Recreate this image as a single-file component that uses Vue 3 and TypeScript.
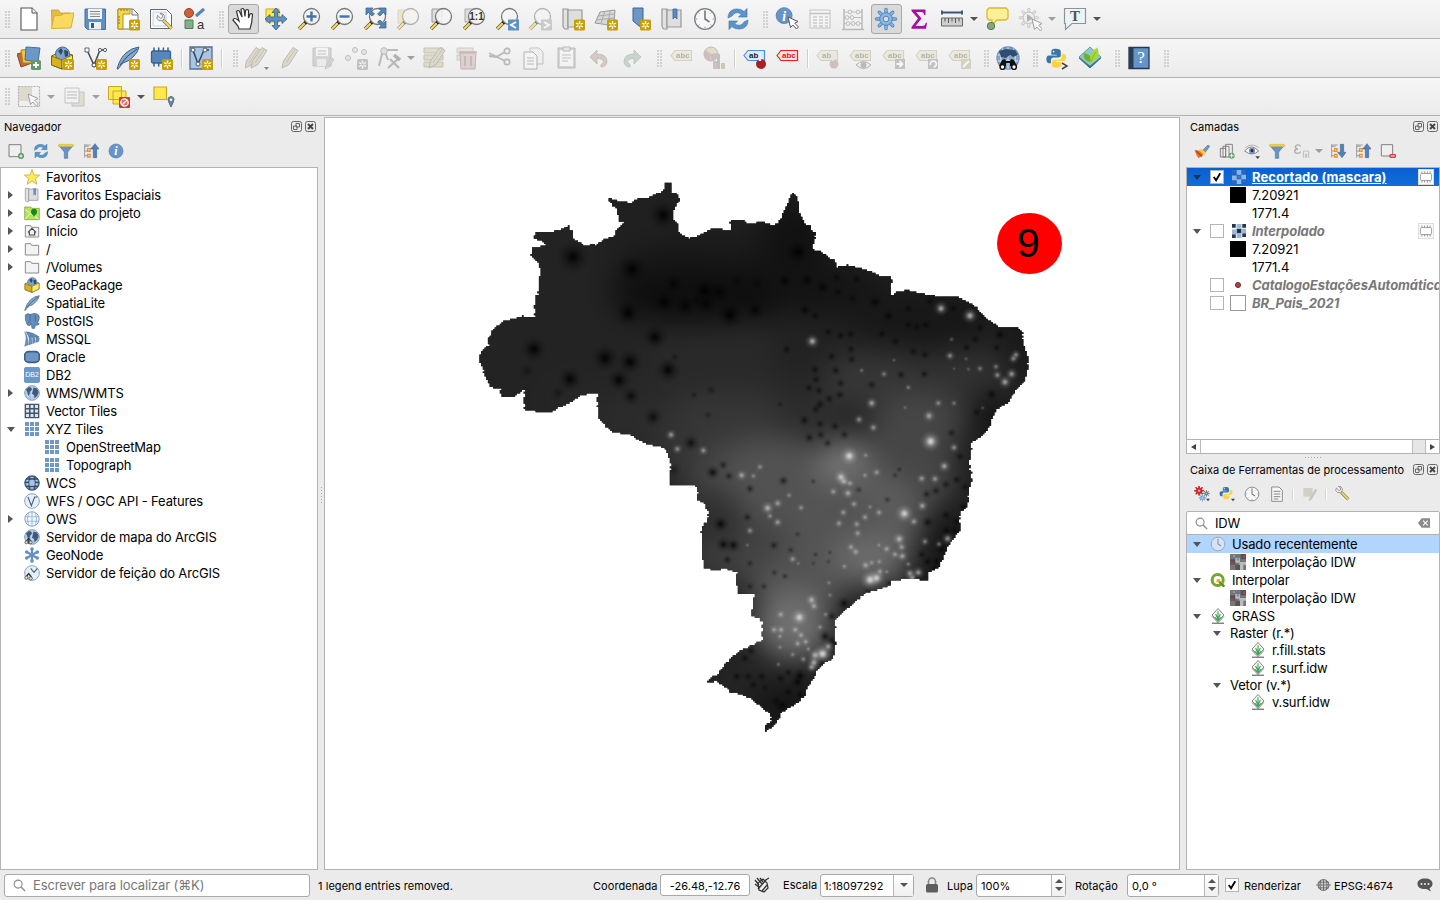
<script setup lang="ts">
interface Row {
  label: string
  icon?: string
  depth?: number
  arrow?: 'open' | 'closed'
  selected?: boolean
  short?: boolean
}
interface Layer {
  label: string
  kind: 'raster' | 'legend' | 'value' | 'point' | 'polygon'
  checked?: boolean
  selected?: boolean
}
interface Dot {
  x: number
  y: number
  r: number
  o: number
}

/* ---------- icon parts ---------- */
const badge = (x: number, y: number, fill = '#c4a000') =>
  `<g transform="translate(${x} ${y})"><rect width="11" height="11" rx="1.5" fill="${fill}"/><path d="M5.5 1.6v7.8M2.1 3.5l6.8 4M2.1 7.5l6.8-4" stroke="#fff" stroke-width="1.4"/><circle cx="5.5" cy="5.5" r="1.2" fill="${fill}"/></g>`
const lens = (inner: string, behind = '') =>
  `${behind}<path d="M9.5 14.5L2 22" stroke="#555" stroke-width="3.6"/><path d="M8.5 15.5L2 22" stroke="#fcd94a" stroke-width="2.2"/><path d="M9.8 14.2l-2 2" stroke="#111" stroke-width="3.4"/><circle cx="14.5" cy="9.5" r="8" fill="#f4f4f2" fill-opacity=".85" stroke="#777" stroke-width="1.3"/>${inner}`
const tag = (text: string, fill = '#e6e2c6', line = '#bbb69c', ink = '#777') =>
  `<path d="M2 9.500L6 4.500H22.500V14.500H6z" fill="${fill}" stroke="${line}" stroke-width="1.2"/><text x="7" y="12.300" font-family="Liberation Sans, Arial, sans-serif" font-weight="bold" font-size="8" fill="${ink}">${text}</text>`
const cursor = (x: number, y: number) =>
  `<path transform="translate(${x} ${y})" d="M0 0l2.500 10.500 2.300-2.500 3.700 4 2-2-3.700-3.700 3.200-1.800z" fill="#fff" stroke="#555" stroke-width="1"/>`
const globe = (land: string, bg = '#a9c3e2') =>
  `<circle cx="12" cy="12" r="11" fill="${bg}" stroke="#6f91b7" stroke-width="1.3"/><path d="M1.500 9h21M1.500 15h21M12 1v22M6.500 2.500Q3 12 6.500 21.500M17.500 2.500Q21 12 17.500 21.500" stroke="#dfe9f5" stroke-width=".9" fill="none"/>${land}`
const land = `<path d="M3 7l4-4 4 1 1 3-3 3-1 5-2 1-1-5zM14 4l5 1 3 5-2 6-4 4-1-5-3-2 1-4z" fill="#3f5b7c"/>`
const refresh = `<path d="M2 11Q2 3 10 2q5-.5 8 2.500l3-3V10h-8.500l3-3Q9 3.500 6 9z" fill="#5f93c8" stroke="#3f78b6" stroke-width=".7"/><path d="M22 13q0 8-8 9-5 .5-8-2.500l-3 3V14h8.500l-3 3Q15 20.500 18 15z" fill="#5f93c8" stroke="#3f78b6" stroke-width=".7"/>`
const clock = `<circle cx="12" cy="12" r="10.300" fill="#f7f7f7" stroke="#7e7e7e" stroke-width="1.300"/><path d="M12 4v8l4.500 3" stroke="#777" stroke-width="1.600" fill="none"/><path d="M12 2.800v1.500M12 19.700v1.500M2.800 12h1.500M19.700 12h1.500M5.500 5.500l1 1M17.500 17.500l1 1M5.500 18.500l1-1M17.500 6.500l1-1" stroke="#6893c0" stroke-width="1"/>`
const python = `<path d="M11.500 1.500c-4 0-5 1.500-5 3V8h6v1H4C1.500 9 1 11 1 13s1 4.500 3 4.500h2V14c0-2 1.500-3 3-3h5.500c1.500 0 2.500-1 2.500-2.500v-4c0-2-2-3-5.500-3z" fill="#3774a8"/><circle cx="9" cy="4.500" r="1" fill="#fff"/><path d="M12.500 22.500c4 0 5-1.500 5-3V16h-6v-1H20c2 0 3-1.500 3-4s-1-4-3-4h-2v3.500c0 2-1.500 3-3 3H9.500C8 14.500 7 15 7 17v3c0 2 2 2.500 5.500 2.500z" fill="#fdd444"/>`
const funnel = `<path d="M1.500 4h21l-8 9.500V23h-5v-9.500z" fill="#6b93bf" stroke="#4d79a8" stroke-width="1"/><path d="M1 2h22v3.500H1z" fill="#f0d33c" stroke="#c2a62c" stroke-width=".6"/>`
const scroll = `<path d="M2 2h5v20H4q-2-1-2-3z" fill="#e2e2e2" stroke="#999" stroke-width="1.200"/><path d="M7 3h14v17H7z" fill="#dedede" stroke="#999" stroke-width="1.200"/>`
const magnet = `<path d="M2.500 2v20M2.500 5h6M2.500 12h5M2.500 19h5M2.500 3h9" stroke="#888" stroke-width="1.200" fill="none"/><path d="M7 8.500h3.500v4H7zM7 17h3.500v4H7z" fill="#fff" stroke="#f08c28" stroke-width="2"/>`
const grid = (c: string) =>
  [1.5, 9, 16.5].map(x => [1.5, 9, 16.5].map(y => `<rect x="${x}" y="${y}" width="6" height="6" fill="${c}"/>`).join('')).join('')
const chip = (c: string, s: string) =>
  `<path d="M5 2.500v19M9.700 2.500v19M14.400 2.500v19M19 2.500v19" stroke="${s}" stroke-width="1.500"/><rect x="2.500" y="6" width="19" height="12" rx="1.500" fill="${c}" stroke="${s}" stroke-width="1.300"/>`
const gearPath = (c: string, s: string) =>
  `<g stroke="${s}" stroke-width="3.400" stroke-linecap="round"><path d="M12 2.500v19M2.500 12h19M5.300 5.300l13.400 13.400M5.300 18.700L18.700 5.300"/></g><g stroke="${c}" stroke-width="1.700" stroke-linecap="round"><path d="M12 2.500v19M2.500 12h19M5.300 5.300l13.400 13.400M5.300 18.700L18.700 5.300"/></g><circle cx="12" cy="12" r="6.300" fill="${c}" stroke="${s}"/><circle cx="12" cy="12" r="2.800" fill="#dedede" stroke="${s}"/>`
const info = `<circle cx="12" cy="12" r="10.500" fill="#6794c5" stroke="#4d7db1" stroke-width="1"/><text x="12" y="18.500" text-anchor="middle" font-family="Liberation Serif, serif" font-style="italic" font-weight="bold" font-size="18" fill="#fff">i</text>`
const box = `<path d="M1.500 10l10-4.500L22.500 9v9L12 23 1.500 19z" fill="#f5dd42" stroke="#6f5e14" stroke-width="1"/><circle cx="12.500" cy="8" r="7" fill="#7fa3cb" stroke="#48678b"/><path d="M8 5l3-3 2 3-2 4zM14 4l4 1v5l-3 1z" fill="#2f4a6b"/><path d="M1.500 10l10.500 4v9L1.500 19z" fill="#d8b21a" stroke="#6f5e14" stroke-width=".8"/><path d="M12 14l10.500-5v9L12 23z" fill="#f9ec62" stroke="#6f5e14" stroke-width=".8"/>`
const feather = `<path d="M1 23Q4 12 10 7q5-5 13-6-1 5-5 9-4 5-11 7l-5 6z" fill="#85a8cf" stroke="#3f6288" stroke-width="1"/><path d="M4 19Q11 9 21 3" stroke="#2f4d6f" stroke-width="1" fill="none"/>`
const vee = `<path d="M4 4l7 15L17 4h4.500" stroke="#3c4c5e" stroke-width="1.500" fill="none"/><path d="M2 2h4v4H2z" fill="#fff" stroke="#556" stroke-width=".9"/><circle cx="11" cy="19" r="2" fill="#fff" stroke="#334"/><circle cx="17" cy="4" r="1.600" fill="#fff" stroke="#556"/><circle cx="22" cy="4" r="1.600" fill="#fff" stroke="#556"/>`
const grass = `<path d="M12 .8l9 9.700L12 20 3 10.500z" fill="#f4f6f4" stroke="#666" stroke-width="1.200"/><path d="M3 12.500L12 22l9-9.500" stroke="#666" stroke-width="1.200" fill="none"/><path d="M3 22.800h18" stroke="#555" stroke-width="1.600"/><path d="M12 20V5M12 17L8.500 9M12 17l3.500-8M12 19l-4.500-5M12 19l4.500-5" stroke="#39a852" stroke-width="1.600"/>`
const wrench = `<path d="M9.500 9.500L20 20" stroke="#8b7929" stroke-width="4.500"/><path d="M10 10l10 10" stroke="#ead77b" stroke-width="2.800"/><path d="M2 3l4 4 2-1 .5-3L5 .5Q10 0 11 4q.5 4-3 6-5 1-7-3z" fill="#eee" stroke="#777" stroke-width="1"/>`
const pencil = (x: number) =>
  `<path transform="translate(${x} 0)" d="M1 22l1.500-7L12 1.500l5 3L8 18.500z" fill="#c9c3ac" stroke="#8e8978" stroke-width="1"/><path transform="translate(${x} 0)" d="M5 17L14.500 3" stroke="#9d9680" stroke-width="1"/>`
const folder = `<path d="M2 4h8l1.500 2.500H22V21H2z" fill="#f3f3f3" stroke="#8b8b8b" stroke-width="1.500"/>`

const icons: Record<string, string> = {
  page: `<path d="M4 1h11l5 5v17H4z" fill="#fff" stroke="#555" stroke-width="1.100"/><path d="M15 1v5h5" fill="#eee" stroke="#555"/>`,
  open: `<path d="M1.500 3h7l2 3H20v4l-18 10z" fill="#e5bd43" stroke="#c79d25" stroke-width=".8"/><path d="M4 9l8-1 2-1.500L24 6l-3 15-19.500.5z" fill="#fcd961" stroke="#d4a92d" stroke-width=".9"/>`,
  save: `<path d="M2 2h20.500v20.500H4.500L2 20z" fill="#5d8fc4" stroke="#44709f" stroke-width="1"/><path d="M5 2h14v10H5z" fill="#f3f3f3"/><path d="M7 4.500h10M7 7h10M7 9.500h10" stroke="#888" stroke-width="1.100"/><path d="M6 15h12v7.500H6z" fill="#eee"/><path d="M8 16h3v5H8z" fill="#39597e"/>`,
  layoutNew: `<path d="M2 2h15l5 5v15H2z" fill="#fff" stroke="#777"/><path d="M2 2h12v5H7v15H2z" fill="#f6d64c" stroke="#b39317"/><path d="M5 2v2M8 2v2M11 2v2M2 10h2M2 13h2M2 16h2" stroke="#8c7312"/><path d="M16 2v6h6" fill="#eee" stroke="#777"/>${badge(13, 12.500)}`,
  layoutMgr: `<path d="M1.500 2.500h16l5 5v14h-21z" fill="#fff" stroke="#666"/><path d="M4 5h13v14H4z" fill="#f4f9ff" stroke="#bdd0e6"/><g transform="translate(7 6) scale(.78)">${wrench}</g>`,
  style: `<circle cx="7" cy="6" r="4.500" fill="#cc6038" stroke="#8b4629"/><path d="M14 9l8-7" stroke="#5586b7" stroke-width="3"/><path d="M3 13h8v8.500H3z" fill="#82b08b" stroke="#4e7d5b"/><text x="15" y="21.500" font-family="Liberation Sans, Arial, sans-serif" font-size="13" fill="#333">a</text>`,
  hand: `<path d="M8 22l-1-3-5-6q1-3 5 0l1 1L5.500 4.500q2-2 3 0L11 10 10 2.500q2-2 3 0l1 7 .5-6q2-2 3 0V11l1.500-4q2-1 2.500.5l-.8 8L19 22z" fill="#fff" stroke="#333" stroke-width="1.200"/>`,
  pan: `<path d="M2 2h13v13H2z" fill="#ffe94e" stroke="#c4a71d"/><path d="M12 1l4 4.500h-2.500V10H18V7.500l5 4.500-5 4.500V14h-4.500v4.500H16L12 23l-4-4.500h2.500V14H6v2.500L1 12l5-4.500V10h4.500V5.500H8z" fill="#5f91c5" stroke="#365f8c" stroke-width=".8"/>`,
  zoomIn: lens('<path d="M14.500 4.500v10M9.500 9.500h10" stroke="#3f74ac" stroke-width="2.400"/>'),
  zoomOut: lens('<path d="M9.500 9.500h10" stroke="#3f74ac" stroke-width="2.400"/>'),
  zoomFull: lens('<path d="M3 1h7L8 3.500l3.500 3.500-2.500 2L5.500 5.500 3 8zM23 1h-7l2 2.500L14.500 7l2.500 2 3.500-3.500L23 8zM23 21h-7l2-2.500-3.500-3.500 2.500-2 3.500 3.500L23 14z" fill="#5587b9" stroke="#315b88" stroke-width=".7"/>'),
  zoomSel: lens('', '<path d="M2 3h11v13H2z" fill="#e8dc91" stroke="#bbb"/>'),
  zoomLayer: lens('', '<path d="M3 2h10v13H3z" fill="#ddd" stroke="#999"/>'),
  zoomNative: lens('<text x="14.500" y="13" text-anchor="middle" font-family="Liberation Sans, Arial, sans-serif" font-weight="bold" font-size="10" fill="#333">1:1</text>', '<path d="M3 2h10v13H3z" fill="#ddd" stroke="#aaa"/>'),
  zoomLast: lens('<path d="M13 12.500h11v11H13z" fill="#5f91c4"/><path d="M21 15l-5 3 5 3" stroke="#fff" stroke-width="1.900" fill="none"/>'),
  zoomNext: lens('<path d="M13 12.500h11v11H13z" fill="#aaa"/><path d="M16 15l5 3-5 3" stroke="#fff" stroke-width="1.900" fill="none"/>'),
  mapNew: scroll + badge(13, 12.5),
  map3d: `<path d="M6 5l15-2-1 13-5 2-14-2z" fill="#d8d8d8" stroke="#999"/><path d="M4 9l16-2M11 4L7 16M16 4l-2 13M2 13l18-2" stroke="#aaa" fill="none"/>${badge(13, 12.500)}`,
  bookmarkNew: `<path d="M6 1h10v19l-4-1-6-5z" fill="#6d96c6" stroke="#3f6590"/>${badge(13, 12.500)}`,
  bookmarks: `${scroll}<path d="M13 2h4v10l-2-2-2 2z" fill="#5d8bc0" stroke="#3d6594" stroke-width=".8"/>`,
  clock,
  clockPale: `<circle cx="12" cy="12" r="10.300" fill="#d5e4f4" stroke="#8fa2b8" stroke-width="1.300"/><path d="M12 4v8l4.500 3" stroke="#8494a8" stroke-width="1.600" fill="none"/>`,
  refresh,
  identify: `<g transform="translate(0 -.5) scale(.76)">${info}</g>${cursor(13, 10)}`,
  table: `<path d="M2 3h20v18H2z" fill="#f8f8f8" stroke="#999"/><path d="M2 6.500h20" stroke="#999" stroke-width="1.500"/><path d="M5 10h4M11 10h4M17 10h3M5 13h4M11 13h4M17 13h3M5 16h4M11 16h4M17 16h3M5 19h4M11 19h4M17 19h3" stroke="#aaa" stroke-width="1.300"/>`,
  abacus: `<path d="M3 2v20M21 2v20M1 22.500h22" stroke="#888" stroke-width="1.500"/><path d="M3 5h18M3 10.500h18M3 16.500h18" stroke="#888"/><g fill="#eee" stroke="#8a8a8a"><circle cx="9" cy="5" r="1.900"/><circle cx="17" cy="5" r="1.900"/><circle cx="6" cy="10.500" r="1.900"/><circle cx="11" cy="10.500" r="1.900"/><circle cx="7" cy="16.500" r="1.900"/><circle cx="12" cy="16.500" r="1.900"/><circle cx="17" cy="16.500" r="1.900"/></g>`,
  gear: gearPath('#8fb6de', '#4c85c1'),
  sigma: `<path d="M4.500 2.500h14v5.500h-1.200q-.5-3-3-3H9l5.500 6.500-6 7.500h7q2.500 0 3.300-3.300h1.200l-1 6H4.500v-1.700l6.500-8.500-6.500-7.500z" fill="#a3109f"/>`,
  measure: `<path d="M1.500 5.500h21M2 3.500v4M22 3.500v4" stroke="#375779" stroke-width="1.900"/><path d="M1.500 11h21v8h-21z" fill="#cfcfcf" stroke="#666"/><path d="M5 11v3.500M8.500 11v5M12 11v3.500M15.500 11v5M19 11v3.500" stroke="#555"/>`,
  tip: `<path d="M4 1h17l2 2v8l-2 2h-9l-5 5v-5H4l-2-2V3z" fill="#fff096" stroke="#d5ba31" stroke-width="1.300"/><circle cx="6" cy="19" r="3.700" fill="#80aa78" stroke="#507a50"/>`,
  action: `<g transform="scale(.9)">${gearPath('#ddd', '#999')}<circle cx="12" cy="12" r="6.300" fill="#eee" stroke="#999"/></g><path d="M9 7l6 4-6 4z" fill="#777"/>${cursor(14, 12)}`,
  textTip: `<path d="M1.500 1.500h21v15H9l-6.500 6V16.500h-1z" fill="#edf4f6" stroke="#8a9599" stroke-width="1.200"/><text x="12" y="14" text-anchor="middle" font-family="Liberation Serif, serif" font-weight="bold" font-size="15" fill="#555">T</text>`,
  addLayer: `<path d="M0 8l11-3 4 12-11 4z" fill="#c5673a" stroke="#884626"/><path d="M4 4l13-1v14H6z" fill="#efc943" stroke="#a98419"/><path d="M9 1l14 1-2 14-13-2z" fill="#6c98c9" stroke="#466e9b"/><rect x="14" y="14" width="10" height="10" rx="1.500" fill="#649a6c"/><path d="M19 16v6M16 19h6" stroke="#fff" stroke-width="2"/>`,
  newGpkg: box + badge(13, 13),
  newShp: vee + badge(13, 13),
  newLite: feather + badge(13, 13),
  newMem: `<g transform="translate(0 -1)">${chip('#5586bd', '#37618e')}</g>${badge(13, 13)}`,
  newVirtual: `<path d="M1 1h22v22H1z" fill="#a9c5e5" stroke="#556f8b" stroke-width="1.300"/><path d="M4 4l5 14L15 4h5" stroke="#334960" stroke-width="1.500" fill="none"/><circle cx="4" cy="4" r="2" fill="#fff" stroke="#456"/><circle cx="9" cy="18" r="2" fill="#fff" stroke="#456"/><circle cx="16" cy="4" r="2" fill="#fff" stroke="#456"/>${badge(13, 13)}`,
  edits: `<g>${pencil(-1)}${pencil(5)}</g><path d="M19 21h5l-2.500 3z" fill="#222"/>`,
  edit: pencil(3),
  saveEdits: `<path d="M2 2h18v18H2z" fill="#bbb" stroke="#999"/><path d="M5 2h12v8H5z" fill="#f3f3f3"/><path d="M7 5h8M7 8h8" stroke="#999"/><path d="M6 13h9v7H6z" fill="#e8e8e8"/><g transform="translate(12 11) scale(.55)">${pencil(3)}</g>`,
  points: `<g fill="#ddd" stroke="#888"><circle cx="11" cy="4" r="2.500"/><circle cx="20" cy="6" r="2.500"/><circle cx="4" cy="12" r="2.500"/></g>${badge(13, 13, '#999')}`,
  vertex: `<path d="M6 4L2 20M7 4h14M8 6l3 8" stroke="#888" stroke-width="2" fill="none"/><circle cx="7" cy="5" r="3.300" fill="#ccc" stroke="#888"/><path d="M11 22l10-9M13 13l9 9" stroke="#888" stroke-width="2.300"/><path d="M17 9l6 5" stroke="#777" stroke-width="3.500"/>`,
  modify: `<path d="M2 2h19v5H2zM2 9h19v5H2zM2 16h19v5H2z" fill="#cbc9a8" stroke="#999b80"/>${pencil(6)}`,
  trash: `<path d="M2 2h16v5H2zM2 9h16v5H2z" fill="#ddd8c5" stroke="#aaa"/><path d="M5 7h16l-1 16H6z" fill="#cbb4b4" stroke="#987e7e"/><path d="M4 6h18M10 10v10M16 10v10" stroke="#987e7e" stroke-width="1.700"/>`,
  cut: `<path d="M1 7l16 8M1 10l7 1 9-5" stroke="#888" stroke-width="1.900" fill="none"/><circle cx="19" cy="5" r="2.700" fill="none" stroke="#888" stroke-width="1.700"/><circle cx="19" cy="16" r="2.700" fill="none" stroke="#888" stroke-width="1.700"/>`,
  copy: `<path d="M9 2h9l4 4v12H9z" fill="#eee" stroke="#999"/><path d="M3 6h9l4 4v13H3z" fill="#f8f8f8" stroke="#777"/><path d="M6 12h7M6 15h7M6 18h7" stroke="#888"/>`,
  paste: `<path d="M4 2h17v20H4z" fill="#bbb" stroke="#888"/><path d="M6 4h13v16H6z" fill="#f7f7f7"/><path d="M9 1h7v4H9z" fill="#ddd" stroke="#888"/><path d="M8 9h9M8 12h9M8 15h6" stroke="#999"/>`,
  undo: `<path d="M3 11l7-7v4q10 0 10 8-1 5-6 5v-2.500q3-1 2.500-3.500-1-2.500-6.500-2.500V18z" fill="#b7a79d" stroke="#98857b" stroke-width=".8"/>`,
  redo: `<path d="M21 11l-7-7v4Q4 8 4 16q1 5 6 5v-2.500q-3-1-2.500-3.500 1-2.500 6.500-2.500V18z" fill="#abb9b1" stroke="#84958b" stroke-width=".8"/>`,
  tag: tag('abc'),
  diagram: `<circle cx="9" cy="8" r="7" fill="#d5c8a4" stroke="#888"/><path d="M9 8L3 4a7 7 0 0 0 5 11zM9 8V15a7 7 0 0 0 7-8z" fill="#ae8f92"/><path d="M11 15h4v8h-4z" fill="#b79393"/><path d="M15 8h3v15h-3z" fill="#829da1"/><path d="M19 17h4v6h-4z" fill="#b8a082"/>`,
  tagPin: tag('ab', '#d9eaff', '#4a90de', '#222') + '<circle cx="19" cy="18" r="5" fill="#aa2020"/><path d="M18 7v8" stroke="#eee" stroke-width="2.500"/>',
  tagRed: tag('abc', '#ffe4e4', '#ff1717', '#e21212'),
  tagPin2: tag('ab') + '<circle cx="19" cy="18" r="4.500" fill="#b29494"/><path d="M18 7v8" stroke="#ddd" stroke-width="2"/>',
  tagEye: tag('abc') + '<path d="M8 19q7-7 15 0-7 7-15 0z" fill="#eee" stroke="#777"/><circle cx="15.500" cy="19" r="3" fill="#888"/>',
  tagMove: tag('abc') + '<path d="M14 13h10v10H14z" fill="#999"/><path d="M15.500 18h5M18.500 15l3 3-3 3" stroke="#fff" stroke-width="1.800" fill="none"/>',
  tagRotate: tag('abc') + '<path d="M14 13h10v10H14z" fill="#999"/><path d="M16.500 19a3 3 0 1 1 3 2" stroke="#fff" stroke-width="1.700" fill="none"/>',
  tagEdit: tag('abc') + '<path d="M14 13h10v10H14z" fill="#bbb79a"/><path d="M16 21l6-6" stroke="#fff" stroke-width="2"/>',
  metasearch: `${globe('<path d="M3 5l7-2 9 1 3 5-5 2-3-2-4 3-5-1z" fill="#314c6f"/>', '#83a5cc')}<path d="M9 13l-3 1-3 6h7v-3h4v3h7l-3-6-3-1-1 2h-4z" fill="#111"/><circle cx="6.500" cy="21" r="2.400" fill="#fff" stroke="#111" stroke-width="1.500"/><circle cx="18" cy="21" r="2.400" fill="#fff" stroke="#111" stroke-width="1.500"/>`,
  console: `<g transform="translate(.5 1.500) scale(.9)">${python}</g><path d="M17 17l5 3-5 3" stroke="#444" stroke-width="1.500" fill="none"/>`,
  leaf: `<path d="M1 12l11-8 11 8-11 11z" fill="#36747d" stroke="#39636a" stroke-width=".7"/><path d="M1.500 13.500L12 23l10.500-9.500" stroke="#e6f2f2" stroke-width="1" fill="none"/><path d="M12 1l11 10-11 9L1 11z" fill="#90c7cc" stroke="#568d93" stroke-width=".8"/><path d="M12 16Q5 15 5.500 7q7 1 8 6z" fill="#6cb32a"/><path d="M12.500 16Q10 6 19.500 1.500q4 12-7 14.500z" fill="#a7d936"/><path d="M12.500 16l5-10" stroke="#7cb022" stroke-width=".8"/>`,
  help: `<path d="M2 1.500h20v21H2z" fill="#6595c8" stroke="#24384f" stroke-width="1.300"/><path d="M2 1.500h4.500v21H2z" fill="#293d53"/><text x="14" y="17" text-anchor="middle" font-family="Liberation Serif, serif" font-size="17" fill="#fff">?</text>`,
  select: `<path d="M2 2h13v14H2z" fill="#c8c6ad"/><path d="M1.500 1.500h21v20h-21z" fill="none" stroke="#777" stroke-width="1.200" stroke-dasharray="2 1"/>${cursor(11, 9)}`,
  form: `<path d="M10 7h12v14H10z" fill="#d0cdb3" stroke="#999"/><path d="M3 3h14v15H3z" fill="#f4f4f4" stroke="#999"/><path d="M5 7h10M5 10h10M5 13h10" stroke="#888"/>`,
  deselect: `<path d="M1.500 1.500h13v13h-13zM6 6h13v13H6z" fill="#ffe94f" stroke="#c7aa1d"/><rect x="12" y="12" width="11" height="11" rx="1" fill="#d93432"/><circle cx="17.500" cy="17.500" r="3.700" fill="#e56d6b" stroke="#fff" stroke-width="1.300"/><path d="M15 20l5-5" stroke="#fff" stroke-width="1.300"/>`,
  selectLoc: `<path d="M2 2h12.500v12.500H2z" fill="#ffe94f" stroke="#c7aa1d" stroke-width="1.200"/><path d="M19 22l-2.500-5.500Q15 12 19 11.500q4 .5 2.500 5z" fill="#69869b" stroke="#4f6d82"/><circle cx="19" cy="14.700" r="1.200" fill="#fff"/>`,
  star: `<path d="M12 .8l3.200 8 8.300.4-6.500 5.500 2.300 8.300-7.300-4.700L4.700 23 7 14.700.5 9.200l8.300-.4z" fill="#ffe95b" stroke="#c8a93b" stroke-width="1.200"/>`,
  spatial: `${scroll}<path d="M14 2h4v11l-2-2-2 2z" fill="#6591c4"/>`,
  project: `<path d="M1 3h9l2 2h11v17H1z" fill="#b6e35b" stroke="#78943b"/><path d="M2 7l8 6 12 8M2 21l7-8" stroke="#fff" fill="none"/><circle cx="15" cy="10" r="4.500" fill="#148a1b"/><path d="M11.500 12h7L15 18z" fill="#148a1b"/>`,
  home: `${folder}<path d="M6 14l6-6 6 6M8 13v5h8v-5" fill="none" stroke="#444" stroke-width="1.700"/>`,
  folder,
  gpkg: box,
  feather,
  elephant: `<path d="M2 3q3-3 8-1 4-2 8-1 5 1 5 6-1 6-3 8l3 1q-2 3-6 2l-1 5h-4l-1-8-2 4-4-1Q1 11 2 3z" fill="#648ebd" stroke="#3f6188"/><path d="M9 3v9l-3 3M17 3v10" stroke="#395a80" fill="none"/>`,
  mssql: `<path d="M1 1q5 5 5 20l-5 2Q5 9 1 1zM7 2q5 5 5 17l-5 2Q9 9 5 2zM13 4q4 5 4 13l-4 2q1-8-2-15zM18 7l5 4-1 5-4 1zM3 1q12 1 20 8H8z" fill="#6790bd" stroke="#47698f" stroke-width=".6"/>`,
  oracle: `<rect x="1" y="4" width="22" height="16" rx="6" fill="#6b96c6" stroke="#3e5e83" stroke-width="2.500"/>`,
  db2: `<rect x="0" y="0" width="24" height="24" rx="3" fill="#6a98cb"/><text x="12" y="15" text-anchor="middle" font-family="Liberation Sans, Arial, sans-serif" font-size="10.500" fill="#fff">DB2</text>`,
  wms: globe(land),
  vtiles: `<path d="M2 2h20v20H2z" fill="#d9e4f1" stroke="#42536a" stroke-width="2"/><path d="M8.700 2v20M15.300 2v20M2 8.700h20M2 15.300h20" stroke="#42536a" stroke-width="2.200"/>`,
  xyz: grid('#6e98c8'),
  wcs: `${globe('<path d="M3 6h18M2 11h20M3 17h18M8 2v20M16 2v20" stroke="#344d6c" stroke-width="2.300"/><path d="M8 8h8v8H8z" fill="#a7c4e6"/>', '#809fbf')}<circle cx="12" cy="12" r="10.500" fill="none" stroke="#344d6c" stroke-width="1.500"/>`,
  wfs: globe('<path d="M6 6l5 13 5-13h4" stroke="#455e7b" stroke-width="1.700" fill="none"/>', '#e9f1fa'),
  ows: `<circle cx="12" cy="12" r="10.800" fill="#f2f7fd" stroke="#769dcb" stroke-width="1.400"/><path d="M1.500 8.500h21M1.500 15.500h21M12 1v22M7 2Q3 12 7 22M17 2Q21 12 17 22" stroke="#8daed4" stroke-width="1.200" fill="none"/>`,
  arcmap: `${globe(land)}<path d="M3 19l4-5 4 5M7 14v8" stroke="#333" stroke-width="1.600"/><circle cx="3.500" cy="20" r="2.200" fill="#ddd" stroke="#333"/><circle cx="10" cy="20" r="2.200" fill="#ddd" stroke="#333"/>`,
  arcfeat: `${globe('<path d="M10 5l5 6 5-6" stroke="#455e7b" stroke-width="1.600" fill="none"/>', '#e9f1fa')}<path d="M3 18l4-5 4 5" stroke="#333" stroke-width="2" fill="none"/><circle cx="3.500" cy="19" r="2.500" fill="#ddd" stroke="#333"/><circle cx="10" cy="20" r="2.500" fill="#ddd" stroke="#333"/>`,
  geonode: `<path d="M12 2v20M3.500 7l17 10M3.500 17l17-10" stroke="#6690bf" stroke-width="3.500"/><g fill="#6690bf"><circle cx="12" cy="3" r="2.700"/><circle cx="12" cy="21" r="2.700"/><circle cx="4" cy="7.500" r="2.700"/><circle cx="20" cy="7.500" r="2.700"/><circle cx="4" cy="16.500" r="2.700"/><circle cx="20" cy="16.500" r="2.700"/></g>`,
  addSel: `<path d="M1.500 2.500h18v18h-18z" fill="#efefef" stroke="#777" stroke-width="1.400"/><circle cx="19.500" cy="19.500" r="4.500" fill="#5c9666"/><path d="M19.500 17v5M17 19.500h5" stroke="#fff" stroke-width="1.400"/>`,
  funnel,
  collapse: `${magnet}<path d="M15.500 22V9H11.500L18 1l6 8h-3.500v13z" fill="#5282b7" stroke="#365c87" stroke-width=".8"/>`,
  expand: `${magnet}<path d="M15.500 2v12H11.500L18 22l6-8h-3.500V2z" fill="#5282b7" stroke="#365c87" stroke-width=".8"/>`,
  info,
  brush: `<path d="M12 12l9-9 2.500 2L16 15z" fill="#7798bd" stroke="#547392"/><path d="M1 10l9 2 5 5-8 6-3-4z" fill="#e17b33"/><path d="M7 10l5-1 6 6-3 3z" fill="#f2cf46"/><path d="M3 12l9 8" stroke="#c93c2e" stroke-width="2.500"/>`,
  addGroup: `<path d="M10 2h10v16H10z" fill="#eee" stroke="#777" stroke-width="1.400"/><path d="M6 5h9v16H6z" fill="#f4f4f4" stroke="#777" stroke-width="1.400"/><path d="M2 8h8v13H2zM10 5v16" fill="none" stroke="#777" stroke-width="1.400"/><circle cx="19" cy="19" r="4.500" fill="#65a06d"/><path d="M19 16v6M16 19h6" stroke="#fff" stroke-width="1.300"/>`,
  eye: `<path d="M1 12q10-12 21 0-10 9-21 0z" fill="#f7f7f7" stroke="#777" stroke-width="1.300"/><circle cx="12" cy="11.500" r="4.500" fill="#678eb8"/><circle cx="12" cy="11.500" r="2" fill="#223"/><path d="M2 7q10-8 20 0" fill="none" stroke="#999"/><path d="M17 20h7l-3.500 4z" fill="#444"/>`,
  expression: `<path d="M10 5Q8 2.500 5 3 2 3.500 2 6q0 2.500 4 3-5 .5-5 3.500 0 3 4 3 3.500 0 5-2.500" stroke="#777" stroke-width="2" fill="none"/><path d="M14 22v-8q0-2 2-2h4q2 0 2 2v8M17 22v-5h2v5" stroke="#999" stroke-width="1.600" fill="none"/>`,
  remove: `<path d="M2 2.500h17v17H2z" fill="#efefef" stroke="#777" stroke-width="1.400"/><rect x="14" y="16.500" width="10" height="6" rx="2" fill="#e23a40"/><path d="M16 19.500h6" stroke="#fff" stroke-width="1.500"/>`,
  models: `<g transform="translate(-.5 -1) scale(.68)">${gearPath('#d42728', '#c92424')}</g><g transform="translate(13.500 6) scale(.43)">${gearPath('#777', '#777')}</g><g transform="translate(7 12) scale(.48)">${gearPath('#82a9d7', '#82a9d7')}</g><path d="M18 19h6l-3 4z" fill="#444"/>`,
  pyMenu: `<g transform="scale(.88)">${python}</g><path d="M18 19h6l-3 4z" fill="#444"/>`,
  results: `<path d="M4 1.500h11l5 5V23H4z" fill="#f6f6f6" stroke="#888" stroke-width="1.400"/><path d="M7 8h10M7 12h10M7 16h10M7 19.500h7" stroke="#888" stroke-width="1.500"/>`,
  editPlace: `<path d="M2 3h14v13H2z" fill="#bbb9a0"/><path d="M23 6l-9 15-4 2 1-5 9-14z" fill="#aaa99a"/>`,
  wrench,
  idw: `<path d="M0 0h24v24H0z" fill="#777"/><path d="M0 8h8v8H0zM16 0h8v8h-8zM8 16h8v8H8z" fill="#555"/><path d="M8 6h7v7H8zM14 12h10v4H14zM15 16h5v8h-5z" fill="#bbb"/><circle cx="3" cy="14" r="2" fill="#b5414c"/><circle cx="21" cy="4" r="2" fill="#b5414c"/><circle cx="12" cy="8" r="2" fill="#6b92d0"/><circle cx="6" cy="3" r="1.500" fill="#91a9c9"/>`,
  qgis: `<circle cx="11.500" cy="12" r="8.300" fill="#fff" stroke="#72a62e" stroke-width="4.500"/><path d="M10 11l5-1-1 2 8 8-3 2.500-7.500-7.500-2 1z" fill="#e8ac32"/><path d="M15 14l8 7-3 2-7-7z" fill="#54912f"/>`,
  grass,
}

const toolbars: string[][] = [
  ['start', 'page', 'open', 'save', 'layoutNew', 'layoutMgr', 'style', 'grip', '!hand', 'pan', 'zoomIn', 'zoomOut', 'zoomFull', '~zoomSel', 'zoomLayer', 'zoomNative', 'zoomLast', '~zoomNext', 'mapNew', 'map3d', 'bookmarkNew', 'bookmarks', 'clock', 'refresh', 'grip', 'identify', '~table', '~abacus', '!gear', 'sigma', 'measure', 'menu', 'tip', '~action', '~menu', 'textTip', 'menu'],
  ['start', 'addLayer', 'newGpkg', 'newShp', 'newLite', 'newMem', 'sep', 'newVirtual', 'sep', 'grip', '~edits', '~edit', '~saveEdits', '~points', '~vertex', '~menu', '~modify', '~trash', '~cut', '~copy', '~paste', '~undo', '~redo', 'grip', '~tag', '~diagram', 'sep', 'tagPin', 'tagRed', 'sep', '~tagPin2', '~tagEye', '~tagMove', '~tagRotate', '~tagEdit', 'grip', 'metasearch', 'grip', 'console', 'leaf', 'grip', 'help', 'grip'],
  ['start', '~select', '~menu', '~form', '~menu', 'deselect', 'menu', 'selectLoc'],
]
const bare = (t: string) => t.replace(/^[~!]/, '')

const browser: Row[] = [
  { label: 'Favoritos', icon: 'star' },
  { label: 'Favoritos Espaciais', icon: 'spatial', arrow: 'closed' },
  { label: 'Casa do projeto', icon: 'project', arrow: 'closed' },
  { label: 'Início', icon: 'home', arrow: 'closed' },
  { label: '/', icon: 'folder', arrow: 'closed' },
  { label: '/Volumes', icon: 'folder', arrow: 'closed' },
  { label: 'GeoPackage', icon: 'gpkg' },
  { label: 'SpatiaLite', icon: 'feather' },
  { label: 'PostGIS', icon: 'elephant' },
  { label: 'MSSQL', icon: 'mssql' },
  { label: 'Oracle', icon: 'oracle' },
  { label: 'DB2', icon: 'db2' },
  { label: 'WMS/WMTS', icon: 'wms', arrow: 'closed' },
  { label: 'Vector Tiles', icon: 'vtiles' },
  { label: 'XYZ Tiles', icon: 'xyz', arrow: 'open' },
  { label: 'OpenStreetMap', icon: 'xyz', depth: 1 },
  { label: 'Topograph', icon: 'xyz', depth: 1 },
  { label: 'WCS', icon: 'wcs' },
  { label: 'WFS / OGC API - Features', icon: 'wfs' },
  { label: 'OWS', icon: 'ows', arrow: 'closed' },
  { label: 'Servidor de mapa do ArcGIS', icon: 'arcmap' },
  { label: 'GeoNode', icon: 'geonode' },
  { label: 'Servidor de feição do ArcGIS', icon: 'arcfeat' },
]

const layers: Layer[] = [
  { label: 'Recortado (mascara)', kind: 'raster', checked: true, selected: true },
  { label: '7.20921', kind: 'legend' },
  { label: '1771.4', kind: 'value' },
  { label: 'Interpolado', kind: 'raster' },
  { label: '7.20921', kind: 'legend' },
  { label: '1771.4', kind: 'value' },
  { label: 'CatalogoEstaçõesAutomáticas', kind: 'point' },
  { label: 'BR_Pais_2021', kind: 'polygon' },
]
const isLayer = (l: Layer) => l.kind !== 'legend' && l.kind !== 'value'

const tools: Row[] = [
  { label: 'Usado recentemente', icon: 'clockPale', arrow: 'open', selected: true },
  { label: 'Interpolação IDW', icon: 'idw', depth: 1 },
  { label: 'Interpolar', icon: 'qgis', arrow: 'open' },
  { label: 'Interpolação IDW', icon: 'idw', depth: 1 },
  { label: 'GRASS', icon: 'grass', arrow: 'open' },
  { label: 'Raster (r.*)', depth: 1, arrow: 'open', short: true },
  { label: 'r.fill.stats', icon: 'grass', depth: 2 },
  { label: 'r.surf.idw', icon: 'grass', depth: 2 },
  { label: 'Vetor (v.*)', depth: 1, arrow: 'open', short: true },
  { label: 'v.surf.idw', icon: 'grass', depth: 2 },
]

/* ---------- raster layer ---------- */
const outline: number[][] = [
  [664, 182], [672, 182], [672, 193], [677, 193], [679, 200], [677, 205], [673, 212], [674, 218], [677, 225], [678, 231], [683, 235], [690, 238], [697, 236], [703, 233], [713, 229], [731, 230], [731, 221], [744, 220], [747, 224], [762, 222], [772, 225], [778, 224], [782, 214], [790, 201], [791, 194], [794, 193], [798, 201], [800, 212], [805, 225], [810, 225], [811, 231], [816, 233], [815, 243], [812, 246], [814, 250], [822, 252], [827, 257], [836, 260], [837, 267], [847, 265], [860, 268], [870, 271], [880, 276], [890, 277], [892, 286], [891, 296], [897, 292], [907, 290], [920, 293], [937, 296], [955, 296], [968, 302], [980, 310], [988, 320], [998, 327], [1018, 328], [1023, 334], [1024, 347], [1028, 358], [1028, 369], [1025, 379], [1015, 392], [1007, 403], [997, 409], [992, 421], [984, 434], [977, 440], [971, 443], [970, 461], [971, 481], [967, 507], [961, 511], [959, 531], [953, 540], [945, 552], [940, 567], [927, 574], [927, 580], [907, 579], [890, 581], [890, 586], [880, 589], [867, 593], [853, 603], [842, 613], [835, 622], [834, 633], [836, 643], [833, 658], [823, 664], [815, 674], [809, 685], [805, 696], [795, 704], [782, 712], [778, 722], [772, 727], [766, 731], [765, 725], [771, 721], [770, 715], [762, 707], [753, 700], [737, 693], [731, 693], [723, 685], [717, 681], [707, 683], [712, 677], [717, 675], [725, 664], [740, 651], [762, 640], [763, 623], [758, 618], [750, 616], [754, 607], [754, 594], [738, 594], [736, 572], [725, 569], [718, 570], [704, 569], [703, 553], [701, 541], [702, 529], [706, 523], [708, 512], [705, 503], [697, 500], [697, 490], [695, 486], [670, 485], [670, 460], [667, 450], [660, 446], [647, 445], [630, 435], [612, 432], [602, 422], [598, 417], [598, 393], [582, 395], [570, 402], [558, 408], [552, 412], [525, 411], [524, 389], [515, 397], [501, 397], [500, 389], [490, 387], [487, 378], [483, 370], [480, 363], [477, 361], [481, 357], [481, 352], [488, 347], [487, 340], [493, 330], [505, 321], [523, 316], [534, 317], [537, 297], [541, 273], [538, 263], [532, 258], [532, 248], [545, 246], [542, 241], [534, 239], [534, 232], [558, 231], [567, 227], [569, 225], [570, 230], [573, 231], [573, 238], [587, 246], [593, 243], [596, 246], [603, 239], [613, 237], [617, 230], [625, 223], [618, 220], [616, 210], [607, 197], [613, 200], [627, 202], [632, 204], [637, 199], [648, 198], [660, 192], [664, 189],
]
const cell = 1.7
/* Rasterises the outline into rows of cells, which gives the stepped border. */
function rasterise(points: number[][]): string {
  let d = ''
  for (let row = 0; row < 325; row++) {
    const y = 181 + row * cell
    const mid = y + cell / 2
    const xs: number[] = []
    points.forEach(([x1, y1], i) => {
      const [x2, y2] = points[(i + 1) % points.length]
      if (y1 > mid !== y2 > mid) xs.push(x1 + ((mid - y1) / (y2 - y1)) * (x2 - x1))
    })
    xs.sort((a, b) => a - b)
    for (let i = 0; i + 1 < xs.length; i += 2) {
      const noise = (k: number) => ((Math.sin((row + k * 37) * 12.9898) * 43758.5453) % 1) * 1.2
      const a = Math.round((xs[i] + noise(i)) / cell) * cell
      const b = Math.round((xs[i + 1] + noise(i + 1)) / cell) * cell
      if (b > a) d += `M${a.toFixed(1)} ${y.toFixed(1)}H${b.toFixed(1)}v${cell}H${a.toFixed(1)}z`
    }
  }
  return d
}
const mask = rasterise(outline)

/* Broad tone of the surface: x, y, rx, ry, grey level */
const tones: number[][] = [
  [560, 330, 130, 140, 35], [640, 210, 60, 50, 32], [600, 400, 60, 30, 38], [700, 275, 90, 32, 22], [705, 297, 95, 26, 14], [725, 240, 60, 16, 28], [795, 240, 35, 40, 18],
  [830, 290, 60, 24, 19], [900, 320, 90, 34, 24], [730, 365, 90, 42, 41], [650, 420, 60, 25, 44], [700, 450, 50, 28, 52], [730, 415, 60, 25, 54],
  [820, 350, 50, 30, 34], [880, 380, 60, 30, 54], [960, 385, 60, 34, 50], [920, 450, 55, 60, 70], [740, 480, 55, 45, 66], [780, 480, 60, 45, 82],
  [815, 415, 24, 24, 46], [845, 475, 28, 38, 120], [870, 515, 55, 45, 92], [830, 530, 50, 50, 84], [870, 560, 40, 25, 108], [740, 550, 50, 30, 66],
  [800, 585, 50, 30, 84], [795, 625, 40, 34, 112], [720, 520, 22, 30, 46], [1020, 350, 7, 60, 14], [990, 415, 18, 26, 18], [965, 470, 10, 45, 24],
  [945, 540, 18, 34, 20], [925, 576, 22, 8, 14], [755, 682, 50, 24, 36], [785, 705, 35, 20, 20], [836, 625, 6, 26, 14], [855, 608, 12, 6, 18], [830, 678, 12, 12, 20], [975, 312, 40, 8, 20],
]

const survey = (list: number[][], r: number, o: number): Dot[] =>
  list.map(([x, y, k = 1]) => ({ x: 690 + x / 3, y: 170 + y / 2.745, r: r * k, o: Math.min(1, o * k) }))
const wide: Dot[] = [
  [663, 215, 16], [573, 257, 18], [632, 269, 16], [628, 313, 15], [655, 337, 14], [668, 370, 14], [605, 358, 15], [630, 362, 14], [619, 380, 13], [631, 396, 11], [653, 417, 11], [691, 443, 10], [534, 349, 14], [527, 371, 9], [570, 379, 13], [558, 393, 9], [673, 284, 11], [664, 302, 13], [685, 306, 12], [705, 291, 13], [719, 292, 12], [706, 304, 12], [696, 300, 9], [730, 315, 14], [737, 281, 9], [757, 283, 9], [755, 310, 11], [674, 470, 9], [711, 390, 7], [694, 395, 5], [708, 415, 6], [675, 357, 6], [798, 252, 13],
].map(([x, y, r]) => ({ x, y, r, o: r > 12 ? 0.85 : r > 9 ? 0.65 : 0.35 }))
const lows = survey([
  [285, 305, 1.4], [352, 302, 1.3], [397, 322, 1.3], [445, 335], [487, 352], [555, 362, 1.3], [595, 400, 1.2], [345, 385, 1.2], [376, 400], [440, 295], [500, 300], [290, 493], [415, 445], [452, 455], [482, 450], [483, 492], [485, 520], [425, 512], [575, 450], [617, 470], [655, 380], [655, 425], [680, 432], [707, 425], [670, 498], [705, 507], [703, 560], [633, 562], [545, 590], [452, 585], [437, 550], [375, 548], [378, 575], [357, 598], [387, 605], [450, 617], [390, 643, 1.1], [377, 657], [418, 628], [343, 687, 1.1], [390, 697], [435, 703], [463, 727], [392, 727], [358, 735, 1.1], [270, 643, 0.7], [413, 750], [720, 360], [790, 380], [870, 433], [930, 452, 1.2], [855, 465], [830, 487], [920, 488], [905, 615, 1.2], [860, 665], [785, 722], [810, 787], [768, 863], [738, 880], [710, 890], [800, 850], [825, 870], [713, 967, 1.2], [768, 947], [800, 965], [820, 925], [770, 990], [795, 990], [68, 830, 1.4], [117, 840], [100, 810], [280, 853, 1.1], [180, 875], [172, 953], [92, 972, 1.5], [100, 1028, 1.4], [130, 1030, 1.4], [112, 1070], [252, 1030], [302, 1043, 0.8], [323, 1000, 0.7], [180, 1080, 0.8], [285, 1115, 0.8], [253, 1105, 0.8], [222, 1143, 0.8], [180, 1143, 0.8], [377, 1055, 0.7], [370, 1080, 0.6], [420, 1050, 0.6], [415, 1075, 0.6], [592, 905, 0.8], [506, 878, 0.8], [370, 855, 0.7], [628, 822, 0.7], [615, 838, 0.7], [695, 1055], [712, 1075], [740, 1075], [755, 1040], [735, 1095], [680, 1118], [600, 1135], [535, 1160], [462, 1190, 1.3], [425, 1225], [435, 1300], [405, 1280, 1.3], [398, 1355], [425, 1290], [183, 1320], [165, 1340], [140, 1390], [175, 1390], [215, 1390], [190, 1413], [272, 1395], [295, 1380], [330, 1388, 1.4], [322, 1405, 1.3], [295, 1432], [330, 1440], [225, 1420, 0.8], [258, 1457], [275, 1470, 1.3], [235, 1505],
], 6.2, 0.52)
const highs = survey([
  [367, 470, 1.5], [753, 380, 1.5], [840, 400, 1.6], [780, 510, 1.1], [785, 465, 0.7], [545, 640, 1.3], [507, 685, 1.1], [550, 707, 1.1], [722, 745, 2], [717, 675, 1.3], [745, 640, 1], [792, 640, 0.8], [792, 762, 1.1], [763, 813, 1.3], [735, 848, 1.1], [695, 847, 1.1], [478, 785, 1.8], [527, 783, 0.8], [560, 830], [525, 838, 0.8], [453, 843, 1.5], [462, 855, 1.2], [480, 860], [430, 883], [474, 887, 1.2], [492, 917], [460, 940], [447, 970], [500, 972], [525, 953], [503, 997], [483, 1035], [497, 1048], [567, 940], [540, 925, 0.7], [643, 943, 1.8], [697, 922, 1.2], [672, 965, 1.1], [628, 1013, 1.4], [705, 1020], [773, 1012, 1.3], [747, 1027, 0.9], [635, 1035, 1.1], [637, 1060, 1.2], [615, 1055], [590, 1040], [567, 1030, 0.7], [527, 1085, 1.1], [545, 1078, 0.8], [568, 1075, 0.8], [570, 1102], [560, 1120, 1.7], [540, 1125, 1.9], [590, 1103, 0.7], [655, 1082, 0.8], [660, 1107, 1.2], [685, 1105, 1.3], [667, 1120, 1.3], [463, 1088, 0.8], [417, 1133, 0.7], [420, 1167, 0.7], [365, 1180, 1.3], [372, 1197, 1.1], [328, 1228, 1.7], [407, 1220, 0.8], [272, 1220], [252, 1262], [273, 1262], [316, 1262], [270, 1280, 0.8], [333, 1277], [323, 1300], [347, 1295], [270, 1310, 0.7], [308, 1330, 0.8], [355, 1315, 0.8], [375, 1332, 1.4], [398, 1328, 2], [372, 1352, 1.4], [365, 1365, 1.2], [415, 1308, 1.2], [340, 1343, 0.9], [265, 1357, 0.7], [390, 1255, 0.8], [918, 540, 0.9], [922, 563, 1.1], [965, 560, 1.3], [945, 582, 1.4], [978, 507, 1.1], [970, 518, 1.1], [870, 545, 0.9], [828, 518, 0.6], [835, 547, 0.6], [655, 597, 0.8], [582, 560, 0.9], [515, 550, 0.7], [645, 652, 0.6], [612, 522, 0.6], [878, 653, 0.6], [233, 928, 1.4], [263, 915, 1.1], [263, 967, 1.1], [240, 950, 0.9], [180, 990], [297, 893, 0.8], [333, 927, 0.9], [155, 838, 1.2], [190, 840, 0.8], [210, 815, 0.9], [308, 1068], [325, 1080, 0.6], [172, 1030, 0.6], [792, 545, 0.5], [-57, 727, 1.2], [-38, 766, 1.1], [40, 770, 1.1],
], 5.4, 0.4)
</script>

<template>
  <div class="app">
    <div v-for="(bar, b) in toolbars" :key="b" class="toolbar" :class="{ last: b === 2 }">
      <template v-for="(t, i) in bar" :key="i">
        <span v-if="t === 'start'" class="start"><i class="dots" /></span>
        <span v-else-if="t === 'grip'" class="grip"><i class="dots" /></span>
        <span v-else-if="t === 'sep'" class="sep" />
        <span v-else-if="bare(t) === 'menu'" class="menu" :class="{ off: t[0] === '~' }"><i class="tri" /></span>
        <span v-else class="btn" :class="{ off: t[0] === '~', on: t[0] === '!' }">
          <svg class="i24" viewBox="0 0 24 24" fill="none" v-html="icons[bare(t)]" />
        </span>
      </template>
    </div>

    <div class="main">
      <section class="left">
        <header class="title"><span>Navegador</span><span class="winbtns"><svg viewBox="0 0 25 12" fill="none"><rect x=".5" y=".5" width="10" height="10" rx="2" stroke="#666"/><path d="M5 2.500h3.500V6H5zM2.500 5H6v3.500H2.500z" stroke="#666"/><rect x="14.500" y=".5" width="10" height="10" rx="2" stroke="#666"/><path d="M17 3l5 5M22 3l-5 5" stroke="#444" stroke-width="1.900"/></svg></span></header>
        <div class="minibar">
          <svg v-for="n in ['addSel', 'refresh', 'funnel', 'collapse', 'info']" :key="n" class="i16" viewBox="0 0 24 24" fill="none" v-html="icons[n]" />
        </div>
        <div class="tree browser">
          <div v-for="r in browser" :key="r.label" class="row">
            <span class="twist" :class="{ deep: r.depth }"><i v-if="r.arrow" :class="r.arrow" /></span>
            <svg class="i16" viewBox="0 0 24 24" fill="none" v-html="icons[r.icon!]" />
            <span class="lbl">{{ r.label }}</span>
          </div>
        </div>
      </section>
      <div class="split"><i class="vdots" /></div>

      <section class="canvas">
        <svg class="map" viewBox="325 118 854 751">
          <defs>
            <clipPath id="land"><path :d="mask" shape-rendering="crispEdges" /></clipPath>
            <filter id="soft" filterUnits="userSpaceOnUse" x="440" y="150" width="640" height="620" color-interpolation-filters="sRGB"><feGaussianBlur stdDeviation="14" /></filter>
            <radialGradient id="low"><stop offset="0" stop-color="#000" /><stop offset=".15" stop-color="#000" stop-opacity=".85" /><stop offset=".4" stop-color="#000" stop-opacity=".42" /><stop offset=".7" stop-color="#000" stop-opacity=".12" /><stop offset="1" stop-color="#000" stop-opacity="0" /></radialGradient>
            <radialGradient id="high"><stop offset="0" stop-color="#fff" /><stop offset=".2" stop-color="#fff" stop-opacity=".75" /><stop offset=".45" stop-color="#fff" stop-opacity=".3" /><stop offset=".7" stop-color="#fff" stop-opacity=".1" /><stop offset="1" stop-color="#fff" stop-opacity="0" /></radialGradient>
          </defs>
          <g clip-path="url(#land)">
            <rect x="470" y="175" width="565" height="560" fill="#222" />
            <g filter="url(#soft)">
              <rect x="400" y="100" width="700" height="700" fill="#222" />
              <ellipse v-for="(t, i) in tones" :key="i" :cx="t[0]" :cy="t[1]" :rx="t[2]" :ry="t[3]" :fill="`rgb(${t[4]},${t[4]},${t[4]})`" />
            </g>
            <circle v-for="(p, i) in wide" :key="'w' + i" :cx="p.x" :cy="p.y" :r="p.r" :opacity="p.o" fill="url(#low)" />
            <circle v-for="(p, i) in lows" :key="'l' + i" :cx="p.x" :cy="p.y" :r="p.r" :opacity="p.o" fill="url(#low)" />
            <circle v-for="(p, i) in highs" :key="'h' + i" :cx="p.x" :cy="p.y" :r="p.r" :opacity="p.o" fill="url(#high)" />
          </g>
          <ellipse cx="1029.500" cy="243.500" rx="32.500" ry="30.500" fill="#f00" />
          <text class="step" x="1028.500" y="257" text-anchor="middle">9</text>
        </svg>
      </section>

      <div class="split narrow" />
      <section class="right">
        <header class="title"><span>Camadas</span><span class="winbtns"><svg viewBox="0 0 25 12" fill="none"><rect x=".5" y=".5" width="10" height="10" rx="2" stroke="#666"/><path d="M5 2.500h3.500V6H5zM2.500 5H6v3.500H2.500z" stroke="#666"/><rect x="14.500" y=".5" width="10" height="10" rx="2" stroke="#666"/><path d="M17 3l5 5M22 3l-5 5" stroke="#444" stroke-width="1.900"/></svg></span></header>
        <div class="minibar">
          <svg v-for="n in ['brush', 'addGroup', 'eye', 'funnel']" :key="n" class="i16" viewBox="0 0 24 24" fill="none" v-html="icons[n]" />
          <svg class="i16 off" viewBox="0 0 24 24" fill="none" v-html="icons.expression" />
          <i class="tri off" />
          <svg v-for="n in ['expand', 'collapse', 'remove']" :key="n" class="i16" viewBox="0 0 24 24" fill="none" v-html="icons[n]" />
        </div>
        <div class="tree layers">
          <div v-for="(l, i) in layers" :key="i" class="row" :class="{ sel: l.selected }">
            <span class="twist"><i v-if="l.kind === 'raster'" class="open" /></span>
            <span v-if="isLayer(l)" class="check"><svg v-if="l.checked" viewBox="0 0 13 13" fill="none"><path d="M3 6.500l2.500 3.500L10 2.500" stroke="#000" stroke-width="2" /></svg></span>
            <span v-else class="gap" />
            <svg v-if="l.kind === 'raster'" class="ras" viewBox="0 0 15 15"><rect width="15" height="15" :fill="l.selected ? '#1463c8' : '#f3f6fa'" /><path d="M0 0h4v4H0zM11 0h4v4h-4zM5 5h5v5H5zM0 11h4v4H0zM11 10h4v4h-4z" :fill="l.selected ? '#2469bd' : '#28364d'" /><path d="M5 0h5v5H5zM0 6h5v5H0zM10 5h5v5h-5zM5 10h5v5H5z" :fill="l.selected ? '#8fb6e2' : '#9cb6d5'" /><path d="M6 6h3v3H6z" :fill="l.selected ? '#3b7cc9' : '#18263b'" /></svg>
            <span v-else-if="l.kind === 'legend'" class="swatch" />
            <span v-else-if="l.kind === 'value'" class="noswatch" />
            <span v-else-if="l.kind === 'point'" class="pt" />
            <span v-else class="poly" />
            <span class="lbl" :class="{ layer: isLayer(l), current: l.selected }">{{ l.label }}</span>
            <span v-if="l.kind === 'raster'" class="memory"><svg viewBox="0 0 24 24" fill="none" v-html="chip('#fff', '#8a8a8a')" /></span>
          </div>
        </div>
        <div class="hscroll"><span class="end"><i class="lt" /></span><span class="track" /><span class="thumb" /><span class="end"><i class="rt" /></span></div>
        <div class="hsplit"><i /></div>
        <header class="title tbx"><span>Caixa de Ferramentas de processamento</span><span class="winbtns"><svg viewBox="0 0 25 12" fill="none"><rect x=".5" y=".5" width="10" height="10" rx="2" stroke="#666"/><path d="M5 2.500h3.500V6H5zM2.500 5H6v3.500H2.500z" stroke="#666"/><rect x="14.500" y=".5" width="10" height="10" rx="2" stroke="#666"/><path d="M17 3l5 5M22 3l-5 5" stroke="#444" stroke-width="1.900"/></svg></span></header>
        <div class="minibar tools">
          <svg v-for="n in ['models', 'pyMenu', 'clock', 'results']" :key="n" class="i16" viewBox="0 0 24 24" fill="none" v-html="icons[n]" />
          <i class="msep" />
          <svg class="i16 off" viewBox="0 0 24 24" fill="none" v-html="icons.editPlace" />
          <i class="msep" />
          <svg class="i16" viewBox="0 0 24 24" fill="none" v-html="icons.wrench" />
        </div>
        <div class="search">
          <svg class="mag" viewBox="0 0 14 14" fill="none"><circle cx="5.500" cy="5.500" r="4.300" stroke="#888" stroke-width="1.200" /><path d="M8.700 8.700L13 13" stroke="#888" stroke-width="1.400" /></svg>
          <span class="lbl">IDW</span>
          <svg class="clear" viewBox="0 0 14 10"><path d="M4 0h9v10H4L0 5z" fill="#8a8a8a" /><path d="M5.500 2.500l5 5M10.500 2.500l-5 5" stroke="#fff" stroke-width="1.200" /></svg>
        </div>
        <div class="tree toolbox">
          <div v-for="(r, i) in tools" :key="i" class="row" :class="{ hot: r.selected, short: r.short }">
            <span class="twist" :class="'d' + (r.depth || 0)"><i v-if="r.arrow" :class="r.arrow" /></span>
            <svg v-if="r.icon" class="i16" viewBox="0 0 24 24" fill="none" v-html="icons[r.icon]" />
            <span class="lbl">{{ r.label }}</span>
          </div>
        </div>
      </section>
    </div>

    <footer class="status">
      <div class="field locator">
        <svg class="mag" viewBox="0 0 14 14" fill="none"><circle cx="5.500" cy="5.500" r="4.300" stroke="#888" stroke-width="1.200" /><path d="M8.700 8.700L13 13" stroke="#888" stroke-width="1.400" /></svg>
        <span>Escrever para localizar (⌘K)</span>
      </div>
      <span class="msg">1 legend entries removed.</span>
      <span class="c1">Coordenada</span>
      <span class="field coord">-26.48,-12.76</span>
      <svg class="mouse" viewBox="0 0 16 16" fill="none"><path d="M4 6l5-4 4 4 1 5-4 4-5-2z" fill="#eee" stroke="#333" stroke-width="1.200" /><path d="M1 3l4 5M3 1l5 6M6 1l3 4M1 7l5 4M4 12l8-9M8 14l5-6M10 4l5-3" stroke="#333" stroke-width="1.300" /></svg>
      <span class="c2">Escala</span>
      <span class="field scale"><span>1:18097292</span><b><i class="tri" /></b></span>
      <svg class="lock" viewBox="0 0 14 16" fill="none"><path d="M3.500 8V4.500a3.500 3.500 0 0 1 7 0V8" stroke="#888" stroke-width="1.600" /><rect x="1" y="7" width="12" height="8.500" rx="1.500" fill="#5e5e5e" /></svg>
      <span class="c3">Lupa</span>
      <span class="field zoom"><span>100%</span><b class="spin"><i class="up" /><i class="tri" /></b></span>
      <span class="c4">Rotação</span>
      <span class="field rot"><span>0,0 °</span><b class="spin"><i class="up" /><i class="tri" /></b></span>
      <span class="check st"><svg viewBox="0 0 13 13" fill="none"><path d="M3 6.500l2.500 3.500L10 2.500" stroke="#000" stroke-width="2" /></svg></span>
      <span class="c5">Renderizar</span>
      <svg class="crs" viewBox="0 0 16 14" fill="none"><circle cx="8" cy="7" r="5.800" fill="#ccc" stroke="#666" /><path d="M0 7h16M2 4h12M2 10h12M8 1v12M5 1.500Q3.500 7 5 12.500M11 1.500Q12.500 7 11 12.500" stroke="#666" stroke-width=".9" /></svg>
      <span class="c6">EPSG:4674</span>
      <svg class="log" viewBox="0 0 16 14"><path d="M8 .5c4.500 0 7.500 2 7.500 5.300 0 2-1 3.500-3 4.400l1.500 3.300-4.500-2.500C4 11.500.5 9.500.5 5.800.5 2.500 3.500.5 8 .5z" fill="#555" /><g fill="#eee"><circle cx="4.500" cy="6" r="1" /><circle cx="8" cy="6" r="1" /><circle cx="11.500" cy="6" r="1" /></g></svg>
    </footer>
  </div>
</template>

<style>
body { margin: 0; overflow: hidden; }
</style>

<style scoped>
.app { width: 1440px; height: 900px; display: flex; flex-direction: column; background: #ebebeb; font-family: Inter, "Liberation Sans", sans-serif; font-size: 13px; color: #000; overflow: hidden; }
.toolbar { height: 38px; flex: none; display: flex; align-items: center; border-bottom: 1px solid #b1b1b1; background: linear-gradient(#f6f6f6, #ebebeb); }
.toolbar.last { height: 37px; }
.start { width: 12.5px; flex: none; display: flex; padding-left: 5px; box-sizing: border-box; }
.grip { width: 16px; flex: none; display: flex; padding-left: 8px; box-sizing: border-box; }
.dots { width: 5px; height: 17px; background: radial-gradient(circle at 1px 1px, #c6c6c6 .6px, transparent 1px) 0 0 / 3px 3px; }
.sep { width: 1px; height: 19px; margin: 0 3px; flex: none; background: #cfcfcf; box-shadow: 1px 0 #fff; }
.btn { width: 31px; height: 30px; margin: 0 1px; flex: none; display: flex; align-items: center; justify-content: center; box-sizing: border-box; border: 1px solid transparent; border-radius: 3px; }
.btn.on { background: #d9d9d9; border-color: #a9a9a9; }
.i24 { width: 24px; height: 24px; flex: none; }
.i16 { width: 16px; height: 16px; flex: none; }
.off { opacity: .52; }
.menu { width: 12px; flex: none; display: flex; justify-content: center; padding-right: 1px; margin-right: -1px; box-sizing: border-box; }
.menu + * { margin-left: 2px; }
.tri { width: 0; height: 0; flex: none; border: 4px solid transparent; border-top-color: #555; border-bottom: 0; }

.main { flex: 1; display: flex; min-height: 0; padding-top: 1px; }
.left { width: 318px; display: flex; flex-direction: column; }
.right { width: 254px; display: flex; flex-direction: column; min-width: 0; }
.split { width: 6px; display: flex; align-items: center; justify-content: center; }
.vdots { width: 1px; height: 16px; margin-top: 2px; background: repeating-linear-gradient(#aaa 0 1px, transparent 1px 3px); }
.canvas { width: 854px; border: 1px solid #b3b3b3; background: #fff; }
.map { display: block; width: 854px; height: 751px; }
.step { font: 41px "Liberation Sans", Arial, sans-serif; fill: #000; }
.title { height: 20px; display: flex; align-items: center; justify-content: space-between; padding: 0 2px 0 4px; font-size: 11px; letter-spacing: .05px; white-space: nowrap; }
.winbtns { display: flex; }
.winbtns svg { width: 25px; height: 12px; }
.minibar { height: 30px; box-sizing: border-box; padding: 0 8px 2px; display: flex; align-items: center; gap: 9px; }
.right .minibar .tri { margin: 0 -2px 0 -4px; }
.tree { background: #fff; border: 1px solid #b3b3b3; box-sizing: border-box; overflow: hidden; }
.browser { flex: 1; }
.row { height: 18px; display: flex; align-items: center; white-space: nowrap; }
.row.short { height: 16px; }
.lbl { letter-spacing: -.16px; }
.twist { width: 23px; flex: none; display: flex; align-items: center; padding-left: 7px; box-sizing: border-box; }
.twist.deep { width: 43px; }
.browser .lbl { margin-left: 6px; }
.browser .twist { padding-left: 6px; }
.closed { border: 4px solid transparent; border-left: 5px solid #555; border-right: 0; margin-left: 1px; }
.open { border: 4px solid transparent; border-top: 5px solid #555; border-bottom: 0; }
.layers { height: 272px; flex: none; border-bottom: 0; }
.layers .twist { padding-left: 6px; }
.sel { background: linear-gradient(#0a5fd0, #126ed8); color: #fff; }
.sel .open { border-top-color: #16355e; }
.check { width: 14px; height: 14px; box-sizing: border-box; border: 1px solid #b4b4b4; background: #fff; flex: none; display: flex; }
.check svg { width: 12px; height: 12px; }
.layers .twist + * { margin-right: 7px; }
.gap { width: 14px; flex: none; }
.ras { width: 14px; height: 14px; margin: 0 6px 0 1px; flex: none; }
.swatch { width: 16px; height: 16px; margin: 0 6px 0 -1px; background: #000; flex: none; }
.noswatch { width: 15px; margin-right: 6px; flex: none; }
.pt { width: 4px; height: 4px; margin: 0 11px 0 4px; border: 1px solid #5f2929; border-radius: 50%; background: #b3423f; flex: none; }
.poly { width: 14px; height: 14px; margin: 0 6px 0 -1px; border: 1px solid #999; flex: none; }
.layers .lbl { letter-spacing: -.07px; }
.lbl.layer { font-weight: 700; font-style: italic; color: #787878; }
.layers .lbl.current { color: #fff; font-style: normal; text-decoration: underline; letter-spacing: .05px; }
.memory { width: 14px; height: 14px; margin-left: auto; margin-right: 5px; border: 1px solid #ddd; background: #fafafa; flex: none; display: flex; }
.memory svg { width: 14px; height: 14px; }
.hscroll { height: 15px; box-sizing: border-box; border: 1px solid #b3b3b3; background: #fff; display: flex; flex: none; }
.end { width: 13px; display: flex; align-items: center; justify-content: center; }
.track { flex: 1; border-left: 1px solid #bbb; }
.thumb { width: 12px; background: #e6e6e6; border: 1px solid #bbb; border-width: 0 1px; }
.lt { border: 3.5px solid transparent; border-right: 5px solid #444; border-left: 0; }
.rt { border: 3.5px solid transparent; border-left: 5px solid #444; border-right: 0; }
.hsplit { height: 6px; display: flex; justify-content: center; align-items: center; flex: none; }
.hsplit i { width: 16px; height: 1px; background: repeating-linear-gradient(90deg, #aaa 0 1px, transparent 1px 3px); }
.tbx { flex: none; letter-spacing: .02px; }
.minibar.tools { height: 31px; flex: none; padding-bottom: 3px; }
.msep { width: 1px; height: 11px; background: #fff; box-shadow: -1px 0 #d5d5d5; margin: 0 -1px; }
.search { height: 24px; margin-bottom: -1px; box-sizing: border-box; flex: none; display: flex; align-items: center; background: #fff; border: 1px solid #b3b3b3; border-radius: 2px; padding: 0 8px; }
.mag { width: 13px; height: 13px; flex: none; }
.search .lbl { margin-left: 7px; flex: 1; }
.clear { width: 13px; height: 10px; }
.toolbox { flex: 1; }
.toolbox .twist { padding-left: 6px; }
.toolbox .twist.d1 { width: 43px; }
.toolbox .twist.d2 { width: 63px; }
.toolbox .short .twist.d1 { padding-left: 26px; width: 37px; }
.toolbox .lbl { margin-left: 6px; }
.hot { background: #b1d5ff; }
.status { height: 30px; flex: none; display: flex; align-items: center; font-size: 11px; white-space: nowrap; letter-spacing: .05px; }
.status > * { flex: none; box-sizing: border-box; }
.field { height: 23px; border: 1px solid #a9a9a9; border-radius: 3px; background: #fff; display: flex; align-items: center; box-sizing: border-box; }
.locator { width: 306px; margin-left: 4px; padding-left: 8px; font-size: 13px; color: #777; gap: 7px; letter-spacing: -.13px; }
.msg, .c1, .c2, .c3, .c4, .c5, .c6 { padding-top: 2px; }
.msg { width: 275px; margin-left: 8px; }
.c1 { width: 67px; }
.coord { width: 90px; height: 22px; justify-content: center; padding-top: 1px; }
.mouse { width: 16px; height: 16px; margin-left: 4px; }
.c2 { width: 36px; margin-left: 13px; padding-top: 0; }
.scale { width: 94px; padding-left: 3px; margin-left: 1px; justify-content: space-between; }
.scale > span, .zoom > span, .rot > span { padding-top: 1px; }
.field b { width: 19px; height: 100%; border-left: 1px solid #b5b5b5; background: linear-gradient(#fff, #f0f0f0); display: flex; align-items: center; justify-content: center; }
.field b.spin { width: 13px; flex-direction: column; gap: 4px; }
.up { border: 4px solid transparent; border-bottom-color: #555; border-top: 0; }
.lock { width: 14px; height: 16px; margin-left: 11px; }
.c3 { width: 28px; margin-left: 8px; }
.zoom { width: 90px; margin-left: 1px; padding-left: 4px; justify-content: space-between; }
.c4 { width: 44px; margin-left: 9px; }
.rot { width: 92px; margin-left: 8px; padding-left: 4px; justify-content: space-between; }
.check.st { margin-left: 6px; }
.c5 { width: 58px; margin-left: 5px; }
.crs { width: 15px; height: 14px; margin-left: 14px; }
.c6 { width: 62px; margin-left: 3px; }
.log { width: 16px; height: 14px; margin-left: 21px; }
</style>
